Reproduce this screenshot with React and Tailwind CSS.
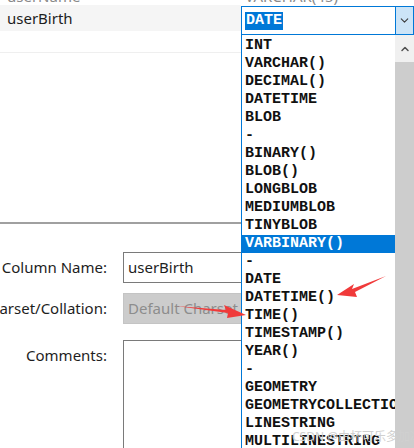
import { ChevronDown, ChevronUp } from "lucide-react";

const types = [
  "INT",
  "VARCHAR()",
  "DECIMAL()",
  "DATETIME",
  "BLOB",
  "-",
  "BINARY()",
  "BLOB()",
  "LONGBLOB",
  "MEDIUMBLOB",
  "TINYBLOB",
  "VARBINARY()",
  "-",
  "DATE",
  "DATETIME()",
  "TIME()",
  "TIMESTAMP()",
  "YEAR()",
  "-",
  "GEOMETRY",
  "GEOMETRYCOLLECTION",
  "LINESTRING",
  "MULTILINESTRING",
];

const ui = { fontFamily: '"Noto Sans", "Open Sans", sans-serif' };
const mono = { fontFamily: '"Liberation Mono", "DejaVu Sans Mono", monospace' };

function FormRow({ label, children, top }) {
  return (
    <div className={`shrink-0 flex ${top ? "items-start" : "items-center"} gap-4`}>
      <div className="w-[107px] shrink-0 flex justify-end overflow-hidden">
        <span className={`whitespace-nowrap shrink-0 text-[15px] text-[#1e1e1e] ${top ? "mt-[4px]" : ""}`}>
          {label}
        </span>
      </div>
      {children}
    </div>
  );
}

export default function App() {
  return (
    <div className="relative w-[414px] h-[448px] overflow-hidden bg-white flex" style={ui}>
      {/* left: grid + form */}
      <div className="w-[241px] shrink-0 flex flex-col">
        <div className="h-[5px] shrink-0 overflow-hidden flex items-start px-[7px]">
          <span className="text-[15px] leading-[18px] text-[#8a8a8a] -mt-[13px]">userName</span>
        </div>
        <div className="h-[26px] shrink-0 bg-[#f5f5f5] flex items-center px-[7px]">
          <span className="text-[15px] text-[#1e1e1e]">userBirth</span>
        </div>
        <div className="h-[22px] shrink-0 border-b border-[#efefef]" />
        <div className="h-[171px] shrink-0 border-b-2 border-[#a0a0a0]" />

        <div className="shrink-0 flex flex-col pt-[28px]">
          <FormRow label="Column Name:">
            <div className="flex-1 h-[31px] border border-[#7a7a7a] border-r-0 flex items-center px-[4px] text-[15px] text-[#1e1e1e]">
              userBirth
            </div>
          </FormRow>
          <div className="h-[10px] shrink-0" />
          <FormRow label="Charset/Collation:">
            <div className="flex-1 h-[31px] bg-[#cccccc] border border-[#c4c4c4] border-r-0 flex items-center px-[4px] text-[15px] text-[#8d8d8d] whitespace-nowrap overflow-hidden">
              Default Charset
            </div>
          </FormRow>
          <div className="h-[16px] shrink-0" />
          <FormRow label="Comments:" top>
            <div className="flex-1 h-[120px] border border-[#7a7a7a] border-r-0" />
          </FormRow>
        </div>
      </div>

      {/* right: combobox + open list */}
      <div className="flex-1 flex flex-col">
        <div className="h-[6px] shrink-0 overflow-hidden flex items-start px-[4px]">
          <span className="text-[15px] leading-[18px] text-[#8a8a8a] -mt-[13px]">VARCHAR(45)</span>
        </div>
        <div className="h-[29px] shrink-0 border border-[#0078d7] flex">
          <div className="flex-1 flex items-center pl-[3px]">
            <span className="bg-[#0078d7] text-white text-[15px] leading-[18px] font-bold px-px" style={mono}>
              DATE
            </span>
          </div>
          <div className="w-[18px] bg-[#cce4f7] border-l border-[#0078d7] flex items-center justify-center">
            <ChevronDown size={13} strokeWidth={2} className="text-[#3c3c3c]" />
          </div>
        </div>
        <div className="flex-1 flex overflow-hidden">
          <div className="w-[154px] shrink-0 border-l border-[#0078d7] pt-[2px] overflow-hidden">
            {types.map((t, i) => (
              <div
                key={i}
                className={`h-[18px] pl-[3px] text-[15px] leading-[18px] font-bold whitespace-nowrap ${
                  t === "VARBINARY()" ? "bg-[#0078d7] text-white" : "text-[#111111]"
                }`}
                style={mono}
              >
                {t}
              </div>
            ))}
          </div>
          <div className="flex-1 flex flex-col">
            <div className="h-[27px] shrink-0 bg-[#f0f0f0] flex items-center justify-center">
              <ChevronUp size={12} strokeWidth={3} className="text-[#505050]" />
            </div>
            <div className="flex-1 bg-[#cdcdcd]" />
          </div>
        </div>
      </div>

      {/* red annotation arrows */}
      <svg className="absolute inset-0 pointer-events-none" width="414" height="448">
        <path d="M386 276 L352 289 L354 284 L337 295 L357 297 L355 292 Z" fill="#f03a3a" />
        <path d="M176 306 L228 313 L227 318 L246 315 L224 305 L226 310 Z" fill="#f03a3a" />
      </svg>

      <span className="absolute left-[292px] top-[428px] text-[12px] text-[#d0d0d0] whitespace-nowrap" style={{ fontFamily: '"Noto Sans", "Noto Sans CJK SC", sans-serif' }}>
        CSDN @由杯可乐多加冰
      </span>
    </div>
  );
}
